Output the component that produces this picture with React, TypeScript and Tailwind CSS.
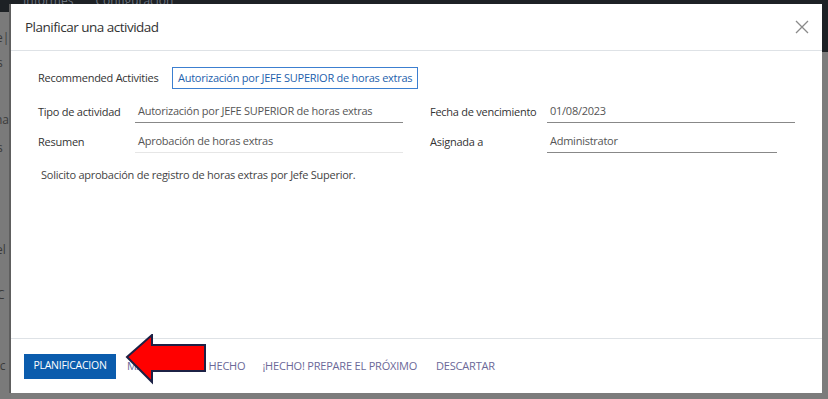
import React from "react";

export default function App() {
  const font = { fontFamily: '"Open Sans", "Noto Sans", sans-serif' };
  return (
    <div className="relative w-[828px] h-[399px] overflow-hidden bg-[#7c7c7c]" style={font}>
      {/* dimmed background page */}
      <div className="absolute left-0 top-0 w-full h-[52px] bg-[#1d2125]" />
      <div className="absolute left-[23px] -top-[8px] text-[12px] text-[#6c7480] flex gap-[22px]">
        <span>Informes</span>
        <span>Configuración</span>
      </div>
      <div className="absolute left-0 top-[12px] w-[11px] h-[387px] bg-[#7a7a7a] text-[12px] text-[#3a3a3a]">
        <div className="absolute -left-[4px] top-[17px]">e|</div>
        <div className="absolute -left-[3px] top-[42px]">s</div>
        <div className="absolute -left-[5px] top-[99px]">na</div>
        <div className="absolute -left-[3px] top-[127px]">s</div>
        <div className="absolute -left-[4px] top-[229px]">el</div>
        <div className="absolute -left-[3px] top-[274px]">C</div>
        <div className="absolute -left-[7px] top-[345px]">ac</div>
      </div>
      <div className="absolute left-[9px] top-[4px] w-[2px] h-[389px] bg-[#5e5e5e]" />

      {/* modal */}
      <div className="absolute left-[11px] top-[4px] w-[811px] h-[389px] bg-white flex flex-col">
        <div className="h-[47px] border-b border-[#dee2e6] flex items-center justify-between pl-[14px] pr-[12px]">
          <span className="text-[13.5px] tracking-[-0.5px] text-[#333]">Planificar una actividad</span>
          <svg width="14" height="14" viewBox="0 0 14 14" className="mr-[1px]">
            <path d="M1 1 L13 13 M13 1 L1 13" stroke="#8a8a8a" strokeWidth="1.3" />
          </svg>
        </div>

        <div className="flex-1 pl-[27px] pt-[16px] text-[11px] tracking-[-0.25px] text-[#333]">
          <div className="flex items-center h-[22px]">
            <span className="w-[134px]">Recommended Activities</span>
            <span className="border border-[#3c7fd0] px-[5px] h-[22px] flex items-center text-[#1d5fad]">
              Autorización por JEFE SUPERIOR de horas extras
            </span>
          </div>

          <div className="flex mt-[12px]">
            <div className="w-[392px]">
              <div className="flex items-center h-[22px]">
                <span className="w-[97px]">Tipo de actividad</span>
                <div className="w-[268px] h-[22px] border-b border-[#888] flex items-center pl-[3px] text-[#555]">
                  Autorización por JEFE SUPERIOR de horas extras
                </div>
              </div>
              <div className="flex items-center h-[22px] mt-[8px]">
                <span className="w-[97px]">Resumen</span>
                <div className="w-[268px] h-[22px] border-b border-[#e6e6e6] flex items-center pl-[3px] text-[#555]">
                  Aprobación de horas extras
                </div>
              </div>
            </div>
            <div>
              <div className="flex items-center h-[22px]">
                <span className="w-[117px]">Fecha de vencimiento</span>
                <div className="w-[248px] h-[22px] border-b border-[#888] flex items-center pl-[3px] text-[#555]">
                  01/08/2023
                </div>
              </div>
              <div className="flex items-center h-[22px] mt-[8px]">
                <span className="w-[117px]">Asignada a</span>
                <div className="w-[230px] h-[22px] border-b border-[#888] flex items-center pl-[3px] text-[#555]">
                  Administrator
                </div>
              </div>
            </div>
          </div>

          <div className="mt-[14px] pl-[3px] text-[#444]">
            Solicito aprobación de registro de horas extras por Jefe Superior.
          </div>
        </div>

        <div className="h-[55px] border-t border-[#dee2e6] flex items-center pl-[13px] text-[11px] tracking-[-0.2px] text-[#6b6898] relative">
          <button className="h-[25px] w-[92px] bg-[#0b5cad] text-white uppercase text-[10.5px] tracking-[-0.25px]">PLANIFICACION</button>
          <span className="ml-[11px]">MARCAR COMO HECHO</span>
          <span className="ml-[17px]">¡HECHO! PREPARE EL PRÓXIMO</span>
          <span className="ml-[19px]">DESCARTAR</span>
          {/* red arrow annotation */}
          <svg className="absolute left-[114px] top-[-5px]" width="82" height="52" viewBox="0 0 82 52">
            <path
              d="M2 23 L27 1 L27 11 L80 11 L80 37 L27 37 L27 48 Z"
              fill="#ff0000"
              stroke="#1c2145"
              strokeWidth="2"
              strokeLinejoin="miter"
            />
          </svg>
        </div>
      </div>
    </div>
  );
}
